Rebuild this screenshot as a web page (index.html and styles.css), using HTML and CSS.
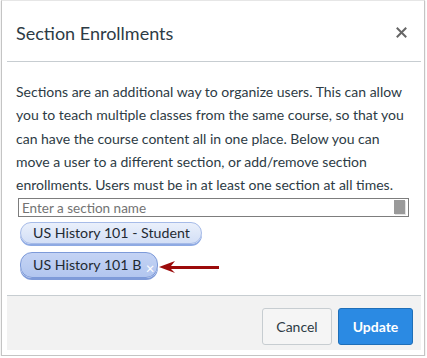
FILE: index.html
```html
<!DOCTYPE html>
<html lang="en">
<head>
    <meta charset="UTF-8">
    <title>Section Enrollments</title>
    <link rel="stylesheet" href="styles.css">
</head>
<body>
    <div class="frame">
        <div class="dialog">
            <div class="dialog-header">
                <h1 class="dialog-title">Section Enrollments</h1>
                <button class="close-btn" aria-label="Close">
                    <svg width="11" height="11" viewBox="0 0 11 11">
                        <path d="M1.5 1.5 L9.5 9.5 M9.5 1.5 L1.5 9.5" stroke="#666" stroke-width="2" stroke-linecap="square"/>
                    </svg>
                </button>
            </div>

            <div class="dialog-body">
                <p class="intro">Sections are an additional way to organize users. This can allow you to teach multiple classes from the same course, so that you can have the course content all in one place. Below you can move a user to a different section, or add/remove section enrollments. Users must be in at least one section at all times.</p>

                <div class="search-box">
                    <input type="text" class="search-input" placeholder="Enter a section name">
                    <span class="search-handle"></span>
                </div>

                <ul class="token-list">
                    <li class="token">US History 101 - Student</li>
                    <li class="token token-selected">US History 101 B<span class="token-remove">&#215;</span></li>
                    <svg class="pointer" width="64" height="16" viewBox="0 0 64 16">
                        <path d="M2 8 L18 2 L14 7 L62 7 L62 10 L14 10 L18 14 Z" fill="#9c0b0b"/>
                    </svg>
                </ul>
            </div>

            <div class="dialog-footer">
                <button class="btn btn-cancel">Cancel</button>
                <button class="btn btn-update">Update</button>
            </div>
        </div>
    </div>
</body>
</html>
```

FILE: styles.css
```css
:root {
    --text-dark: #2d3b45;
    --line-color: #c7cdd1;
    --blue: #2b8ae3;
}

body {
    margin: 0;
    font-family: Lato, 'Open Sans', sans-serif;
    color: var(--text-dark);
    background: white;
}

.frame {
    width: 414px;
    margin-left: 1px;
    padding: 0 3px 5px 5px;
    border: 1px solid #c4c4c4;
    border-top-color: #e6e6e6;
    box-shadow: 0 1px 1px rgba(0,0,0,0.25);
}

.dialog-header {
    height: 60px;
    display: flex;
    align-items: center;
    justify-content: space-between;
    padding: 0 14px 0 9px;
    border-bottom: 1px solid var(--line-color);
}

.dialog-title {
    margin: 4px 0 0;
    font-size: 18px;
    font-weight: normal;
}

.close-btn {
    border: none;
    background: none;
    padding: 0;
    margin-top: 4px;
    cursor: pointer;
}

.dialog-body {
    padding: 18px 8px 0 9px;
    height: 215px;
}

.intro {
    margin: 0;
    font-size: 14px;
    line-height: 23.3px;
}

.search-box {
    position: relative;
    margin: 2px 0 0 2px;
}

.search-input {
    display: block;
    box-sizing: border-box;
    width: 391px;
    height: 19px;
    margin: 0;
    padding: 0 3px;
    border: 1px solid #7d7d7d;
    font-family: inherit;
    font-size: 13.5px;
}

.search-input::placeholder {
    color: #737373;
}

.search-handle {
    position: absolute;
    top: 2px;
    left: 376px;
    width: 11px;
    height: 14px;
    background: #9a9a9a;
    box-shadow: 1px 1px 0 #e2e2e2;
}

.token-list {
    position: relative;
    list-style: none;
    margin: 5px 0 0 4px;
    padding: 0;
    display: flex;
    flex-direction: column;
    align-items: flex-start;
    gap: 8px;
}

.token {
    position: relative;
    height: 20px;
    line-height: 20px;
    padding: 0 11px 0 12px;
    font-size: 14.2px;
    color: #1f2a33;
    border: 1px solid #a6bbe8;
    border-radius: 11px;
    background: linear-gradient(#eaf0fb, #d3dff6);
    box-shadow: 0 2px 0 #8eaae3;
}

.token-selected {
    height: 24px;
    line-height: 24px;
    padding-right: 16px;
    border-radius: 12px;
    background: linear-gradient(#c4d3f4, #b2c6ef);
    border-color: #7d9ad9;
    box-shadow: 0 2px 0 #7f9bd9;
}

.token-remove {
    position: absolute;
    right: 3px;
    top: 3px;
    color: white;
    font-size: 15px;
}

.pointer {
    position: absolute;
    left: 137px;
    top: 37px;
}

.dialog-footer {
    display: flex;
    justify-content: flex-end;
    gap: 6px;
    padding: 12px 8px 5px 0;
    background: #f2f2f2;
    border-top: 1px solid var(--line-color);
}

.btn {
    height: 37px;
    padding: 0 10px;
    border-radius: 3px;
    font-family: inherit;
    font-size: 14px;
    cursor: pointer;
}

.btn-cancel {
    width: 70px;
    background: #f5f5f5;
    color: var(--text-dark);
    border: 1px solid var(--line-color);
}

.btn-update {
    width: 75px;
    background: var(--blue);
    color: white;
    font-weight: bold;
    border: 1px solid #1f6fb8;
}
```
